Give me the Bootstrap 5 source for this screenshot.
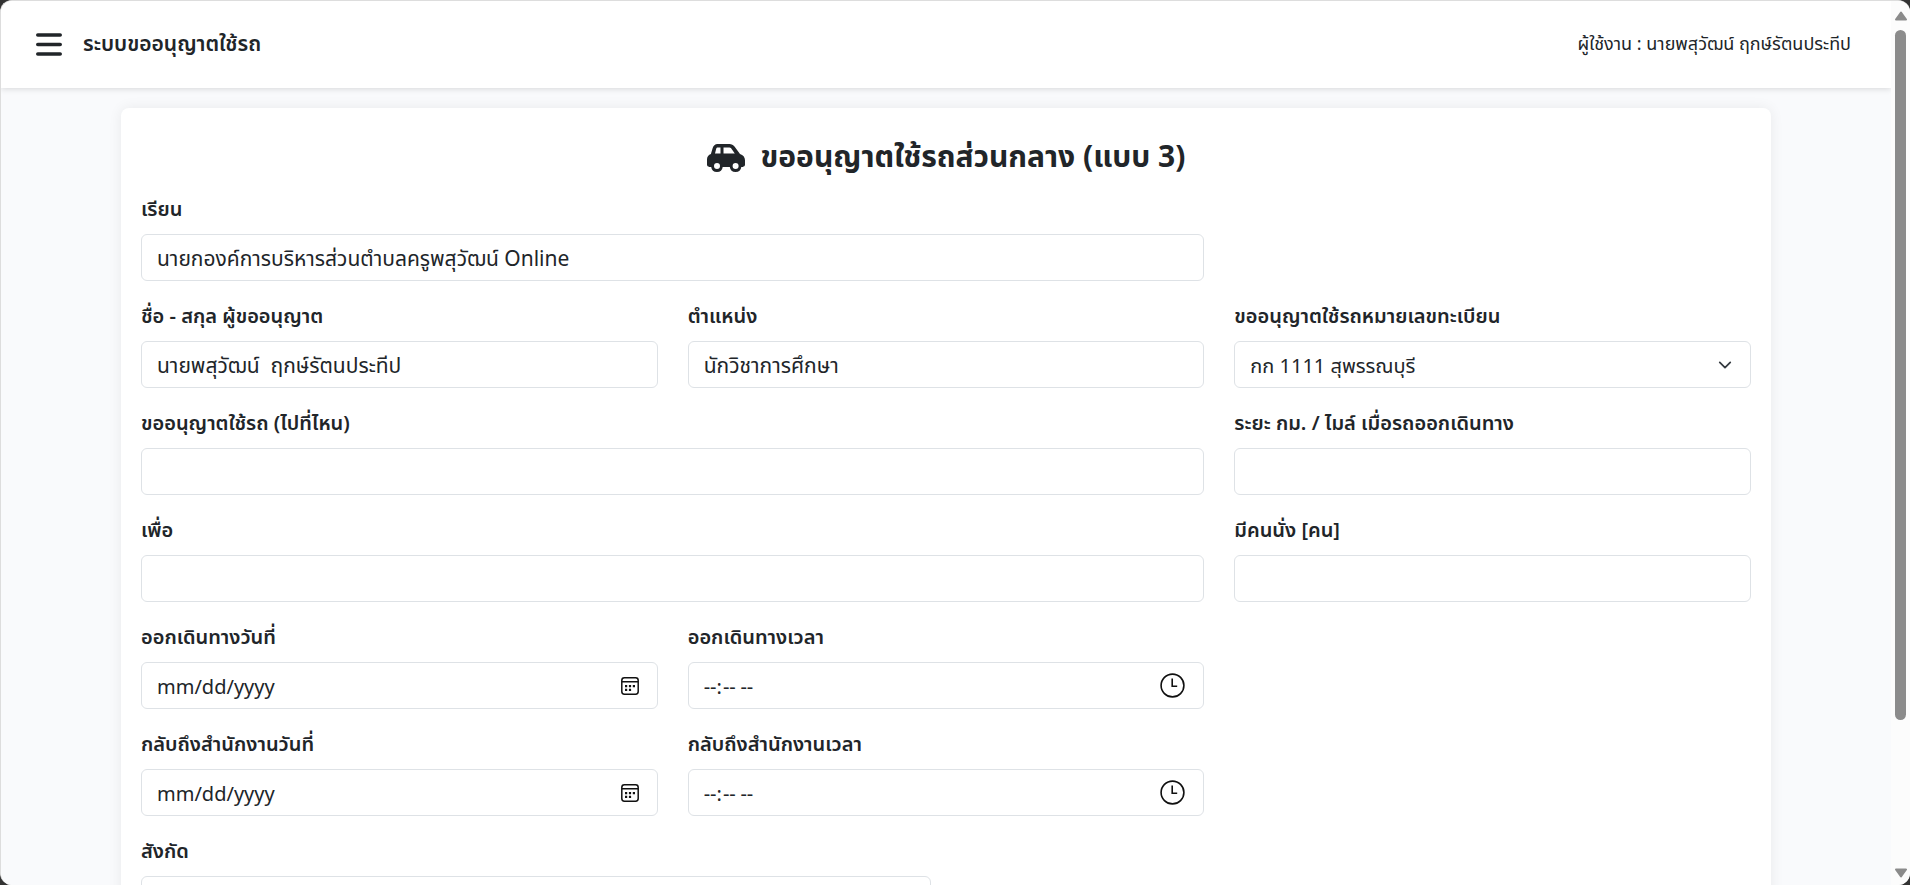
<!DOCTYPE html>
<html lang="th">
<head>
<meta charset="utf-8">
<meta name="viewport" content="width=device-width, initial-scale=1">
<title>ระบบขออนุญาตใช้รถ</title>
<link href="https://cdn.jsdelivr.net/npm/bootstrap@5.3.0/dist/css/bootstrap.min.css" rel="stylesheet">
<style>
  html, body { height: 100%; }
  body { background: #333; font-family: "Noto Sans Thai", Roboto, "Noto Sans", sans-serif; overflow: hidden; color: #212529; }
  .app-window { border: 1px solid #ddd; border-right: 0; border-bottom: 0; border-radius: 12px; background: #fff; }
  .app-page { background: #f9fafc; scrollbar-width: none; }
  .app-page::-webkit-scrollbar { display: none; }
  .app-header { height: 87px; padding: 0 40px 0 35px; background: #fff; box-shadow: 0 1px 6px rgba(0, 0, 0, .14); }
  .menu-btn { margin-right: 21px; line-height: 1; }
  .app-title { font-size: 21px; line-height: 32px; font-weight: 600; }
  .app-user { font-size: 18px; }
  .form-wrap { padding: 20px 120px; }
  .form-sheet { padding: 22px 20px 20px; border-radius: 8px; background: #fff; box-shadow: 0 0 14px rgba(0, 0, 0, .07); }
  .sheet-title { font-size: 30px; line-height: 56px; margin: 0 0 8px; gap: 16px; }
  .form-grid { --bs-gutter-x: 30px; }
  .form-grid > div { margin-bottom: 20px; }
  .form-label { display: block; font-size: 20px; line-height: 32px; margin-bottom: 8px; font-weight: 600; }
  .form-control, .form-select { height: 47px; font-size: 20px; padding: 8px 15px 4px; border-color: #dee2e6; border-radius: 6px; color: #212529; }
  .form-control[type=text] { font-size: 21px; }
  .form-select { background-position: right 16px center; background-size: 18px 14px; padding-right: 48px; }
  input::-webkit-calendar-picker-indicator { padding: 0; margin: 0 3px 4px 0; opacity: 1; background-size: contain; background-repeat: no-repeat; }
  input[type=date]::-webkit-calendar-picker-indicator { width: 18px; height: 18px; background-image: url("data:image/svg+xml,%3Csvg xmlns='http://www.w3.org/2000/svg' viewBox='0 0 18 18'%3E%3Crect x='.8' y='.8' width='16.4' height='16.4' rx='2.6' fill='none' stroke='%23111' stroke-width='1.5'/%3E%3Cpath d='M1 4.8h16' stroke='%23111' stroke-width='1.5'/%3E%3Cpath d='M4 8h2.2v2.2H4zM7.9 8h2.2v2.2H7.9zM11.8 8H14v2.2h-2.2zM4 11.8h2.2V14H4zM7.9 11.8h2.2V14H7.9z' fill='%23111'/%3E%3C/svg%3E"); }
  input[type=time]::-webkit-calendar-picker-indicator { width: 25px; height: 25px; background-image: url("data:image/svg+xml,%3Csvg xmlns='http://www.w3.org/2000/svg' viewBox='0 0 25 25'%3E%3Ccircle cx='12.5' cy='12.5' r='11.4' fill='none' stroke='%23111' stroke-width='1.6'/%3E%3Cpath d='M12.2 5.5v7.8h5' fill='none' stroke='%23111' stroke-width='1.6'/%3E%3C/svg%3E"); }
  .scroll-rail { width: 19px; padding: 10px 4px 7px; background: #fcfcfc; }
  .scroll-thumb { width: 11px; height: 79.6%; margin: 9px 0 auto; border-radius: 6px; background: #8b8b8b; }
</style>
</head>
<body>
<div class="app-window d-flex h-100 overflow-hidden">
  <div class="app-page flex-grow-1 overflow-auto">
    <header class="app-header d-flex align-items-center position-relative">
      <button type="button" class="menu-btn btn p-0 border-0" aria-label="เมนู">
        <svg width="26" height="23" viewBox="0 0 26 23" stroke="#212529" stroke-width="3.6" stroke-linecap="round"><path d="M1.8 2h22.4M1.8 11.5h22.4M1.8 21h22.4"/></svg>
      </button>
      <strong class="app-title">ระบบขออนุญาตใช้รถ</strong>
      <span class="app-user ms-auto">ผู้ใช้งาน : นายพสุวัฒน์ ฤกษ์รัตนประทีป</span>
    </header>
    <main class="form-wrap">
      <form class="form-sheet">
        <h1 class="sheet-title d-flex justify-content-center align-items-center fw-bold">
          <svg width="38" height="28" viewBox="0 0 38 28" aria-hidden="true"><path fill="#212529" fill-rule="evenodd" d="M10.5 0h12c2 0 3.800.9 5 2.400l5.500 7.600c3 .8 5 3.300 5 6.300v4.300c0 1.300-1 2.300-2.300 2.300h-1.400a5.800 5.800 0 0 1-11.500 0h-7.100a5.800 5.800 0 0 1-11.500 0H2.300C1 22.900 0 21.900 0 20.600v-5.300c0-2.500 1.600-4.600 3.900-5.400l1.700-5.700C6.300 1.700 8.100 0 10.500 0zM8 9.500h5.500v-6h-2.700c-.8 0-1.400.5-1.600 1.200zM16.500 9.500h11.300l-3.700-5.200c-.4-.5-1-.8-1.600-.8h-6zM10 19a3 3 0 1 0 0 6 3 3 0 0 0 0-6zM28.600 19a3 3 0 1 0 0 6 3 3 0 0 0 0-6z"/></svg>
          <span>ขออนุญาตใช้รถส่วนกลาง (แบบ 3)</span>
        </h1>
        <div class="row form-grid">
          <div class="col-8"><label class="form-label" for="to">เรียน</label><input class="form-control" id="to" type="text" value="นายกองค์การบริหารส่วนตำบลครูพสุวัฒน์ Online"></div>
        </div>
        <div class="row form-grid">
          <div class="col-4"><label class="form-label" for="fullname">ชื่อ - สกุล ผู้ขออนุญาต</label><input class="form-control" id="fullname" type="text" value="นายพสุวัฒน์  ฤกษ์รัตนประทีป"></div>
          <div class="col-4"><label class="form-label" for="position">ตำแหน่ง</label><input class="form-control" id="position" type="text" value="นักวิชาการศึกษา"></div>
          <div class="col-4"><label class="form-label" for="plate">ขออนุญาตใช้รถหมายเลขทะเบียน</label><select class="form-select" id="plate"><option>กก 1111 สุพรรณบุรี</option></select></div>
          <div class="col-8"><label class="form-label" for="place">ขออนุญาตใช้รถ (ไปที่ไหน)</label><input class="form-control" id="place" type="text"></div>
          <div class="col-4"><label class="form-label" for="distance">ระยะ กม. / ไมล์ เมื่อรถออกเดินทาง</label><input class="form-control" id="distance" type="text"></div>
          <div class="col-8"><label class="form-label" for="purpose">เพื่อ</label><input class="form-control" id="purpose" type="text"></div>
          <div class="col-4"><label class="form-label" for="seats">มีคนนั่ง [คน]</label><input class="form-control" id="seats" type="text"></div>
        </div>
        <div class="row form-grid">
          <div class="col-4"><label class="form-label" for="godate">ออกเดินทางวันที่</label><input class="form-control" id="godate" type="date"></div>
          <div class="col-4"><label class="form-label" for="gotime">ออกเดินทางเวลา</label><input class="form-control" id="gotime" type="time"></div>
        </div>
        <div class="row form-grid">
          <div class="col-4"><label class="form-label" for="backdate">กลับถึงสำนักงานวันที่</label><input class="form-control" id="backdate" type="date"></div>
          <div class="col-4"><label class="form-label" for="backtime">กลับถึงสำนักงานเวลา</label><input class="form-control" id="backtime" type="time"></div>
        </div>
        <div class="row form-grid">
          <div class="col-6"><label class="form-label" for="dept">สังกัด</label><input class="form-control" id="dept" type="text"></div>
        </div>
      </form>
    </main>
  </div>
  <div class="scroll-rail d-flex flex-column flex-shrink-0 align-items-center" aria-hidden="true">
    <svg class="flex-shrink-0" width="12" height="10" viewBox="0 0 12 10"><path d="M6 1.500 11 8.500H1z" fill="#8b8b8b" stroke="#8b8b8b" stroke-width="2" stroke-linejoin="round"/></svg>
    <div class="scroll-thumb"></div>
    <svg class="flex-shrink-0" width="12" height="10" viewBox="0 0 12 10"><path d="M6 8.500 11 1.500H1z" fill="#8b8b8b" stroke="#8b8b8b" stroke-width="2" stroke-linejoin="round"/></svg>
  </div>
</div>
<script src="https://cdn.jsdelivr.net/npm/bootstrap@5.3.0/dist/js/bootstrap.bundle.min.js"></script>
</body>
</html>
